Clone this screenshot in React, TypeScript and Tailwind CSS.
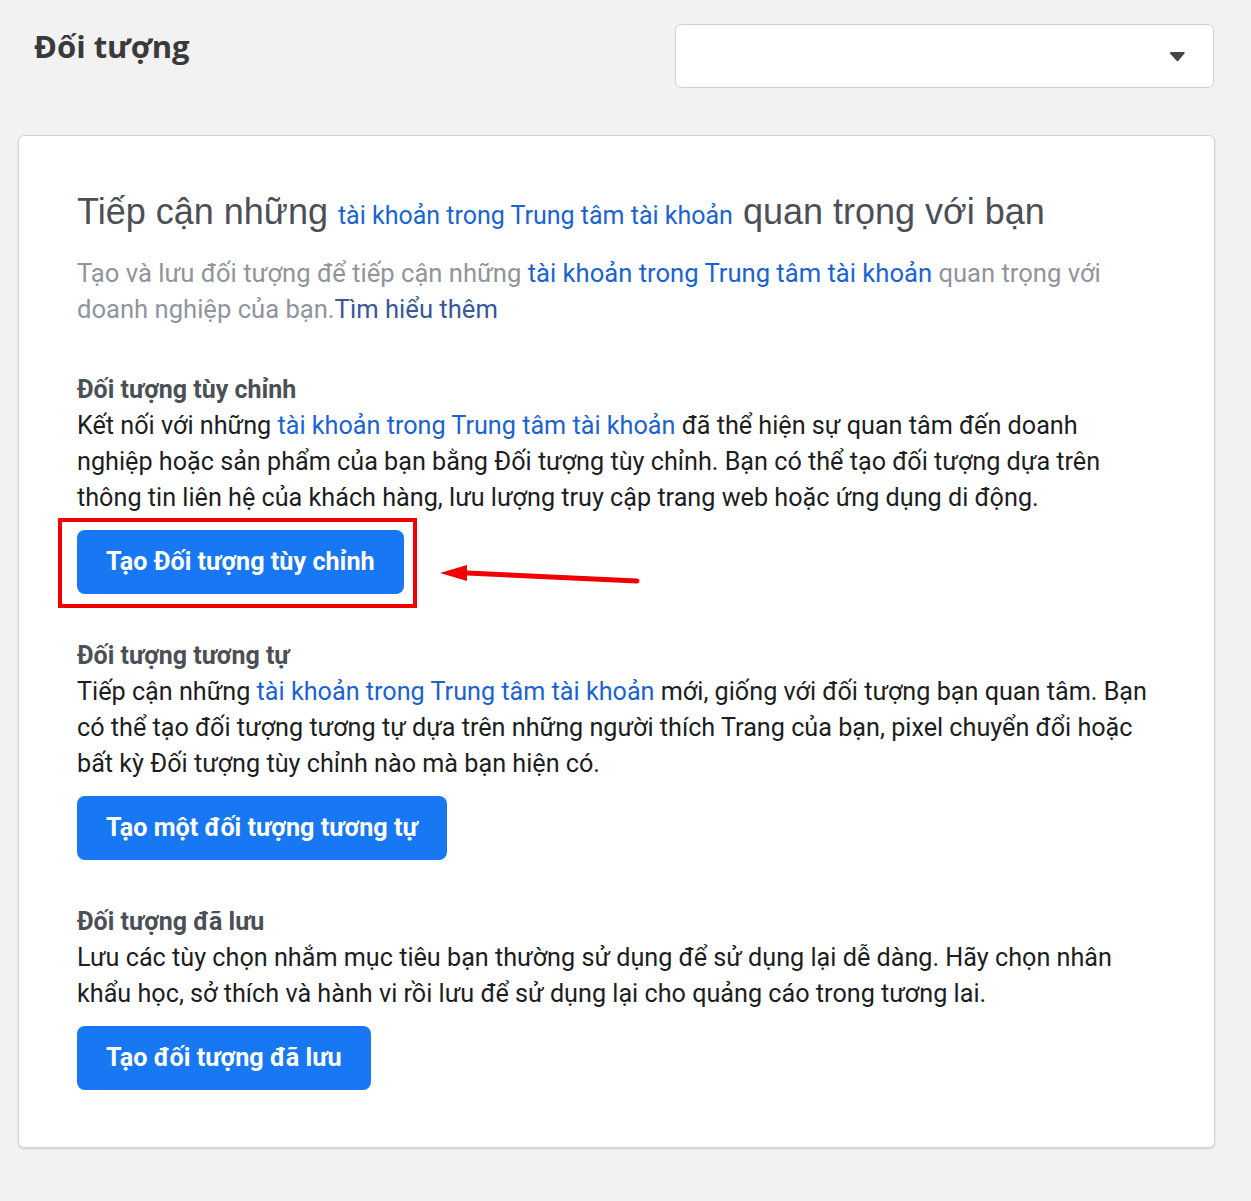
import { ReactNode } from 'react';

const LINK = 'tài khoản trong Trung tâm tài khoản';

function Link({ children }: { children: ReactNode }) {
  return <span className="text-[#1b63d1]">{children}</span>;
}

function Section({
  title,
  children,
  button,
  annotated,
}: {
  title: string;
  children: ReactNode;
  button: string;
  annotated?: boolean;
}) {
  return (
    <div>
      <h3 className="text-[25px] font-bold leading-[36px] text-[#4b4f56]">{title}</h3>
      <p className="text-[25.2px] leading-[36px] text-[#1c1e21]">{children}</p>
      <div className="relative mt-[14px] w-fit">
        <button className="h-[64px] rounded-[8px] bg-[#1877f2] px-[29px] text-[25.2px] font-bold text-white">
          {button}
        </button>
        {annotated && (
          <>
            <div className="pointer-events-none absolute -top-[12px] -bottom-[14px] -left-[19px] -right-[13px] border-[4px] border-[#f00000]" />
            <svg
              className="pointer-events-none absolute left-[350px] top-[28px]"
              width="220"
              height="40"
              viewBox="0 0 220 40"
            >
              <line x1="40" y1="15" x2="210" y2="23" stroke="#f00000" strokeWidth="5" strokeLinecap="round" />
              <polygon points="13,15 40,7 40,23" fill="#f00000" />
            </svg>
          </>
        )}
      </div>
    </div>
  );
}

export default function App() {
  return (
    <div className="min-h-[1201px] bg-[#f2f2f2] pl-[18px] pr-[36px] pt-[24px] font-['Roboto',sans-serif]">
      <div className="flex items-start justify-between">
        <h1 className="ml-[16px] mt-[1px] font-['Open_Sans',sans-serif] text-[31px] font-bold leading-[42px] text-[#3a3a3a]">
          Đối tượng
        </h1>
        <div className="relative mr-[1px] h-[64px] w-[539px] rounded-[6px] border border-[#d0d1d6] bg-white">
          <svg className="absolute right-[27px] top-[27px]" width="17" height="10" viewBox="0 0 17 10">
            <path d="M1 1.5 Q0.5 0 2.5 0 H14.5 Q16.5 0 15.5 1.5 L9.6 8.6 Q8.5 9.8 7.4 8.6 Z" fill="#43464c" />
          </svg>
        </div>
      </div>

      <div className="mt-[47px] rounded-[6px] border border-[#d4d4d4] bg-white pl-[58px] pr-[63px] pt-[54px] pb-[57px] shadow-[0_1px_2px_rgba(0,0,0,0.15)]">
        <h2 className="leading-[44px] text-[#4b4f56]">
          <span className="font-['Liberation_Sans',sans-serif] text-[36px]">Tiếp cận những </span>
          <span className="text-[25px] text-[#1b63d1]">{LINK}</span>
          <span className="font-['Liberation_Sans',sans-serif] text-[36px]"> quan trọng với bạn</span>
        </h2>
        <p className="mt-[14px] text-[25.6px] leading-[36px] text-[#90949c]">
          Tạo và lưu đối tượng để tiếp cận những <Link>{LINK}</Link> quan trọng với doanh nghiệp của bạn.
          <span className="text-[#385898]">Tìm hiểu thêm</span>
        </p>

        <div className="mt-[45px] flex flex-col gap-[44px]">
          <Section title="Đối tượng tùy chỉnh" button="Tạo Đối tượng tùy chỉnh" annotated>
            Kết nối với những <Link>{LINK}</Link> đã thể hiện sự quan tâm đến doanh nghiệp hoặc sản phẩm của bạn
            bằng Đối tượng tùy chỉnh. Bạn có thể tạo đối tượng dựa trên thông tin liên hệ của khách hàng, lưu lượng
            truy cập trang web hoặc ứng dụng di động.
          </Section>
          <Section title="Đối tượng tương tự" button="Tạo một đối tượng tương tự">
            Tiếp cận những <Link>{LINK}</Link> mới, giống với đối tượng bạn quan tâm. Bạn có thể tạo đối tượng
            tương tự dựa trên những người thích Trang của bạn, pixel chuyển đổi hoặc bất kỳ Đối tượng tùy chỉnh nào
            mà bạn hiện có.
          </Section>
          <Section title="Đối tượng đã lưu" button="Tạo đối tượng đã lưu">
            Lưu các tùy chọn nhắm mục tiêu bạn thường sử dụng để sử dụng lại dễ dàng. Hãy chọn nhân khẩu học, sở
            thích và hành vi rồi lưu để sử dụng lại cho quảng cáo trong tương lai.
          </Section>
        </div>
      </div>
    </div>
  );
}
